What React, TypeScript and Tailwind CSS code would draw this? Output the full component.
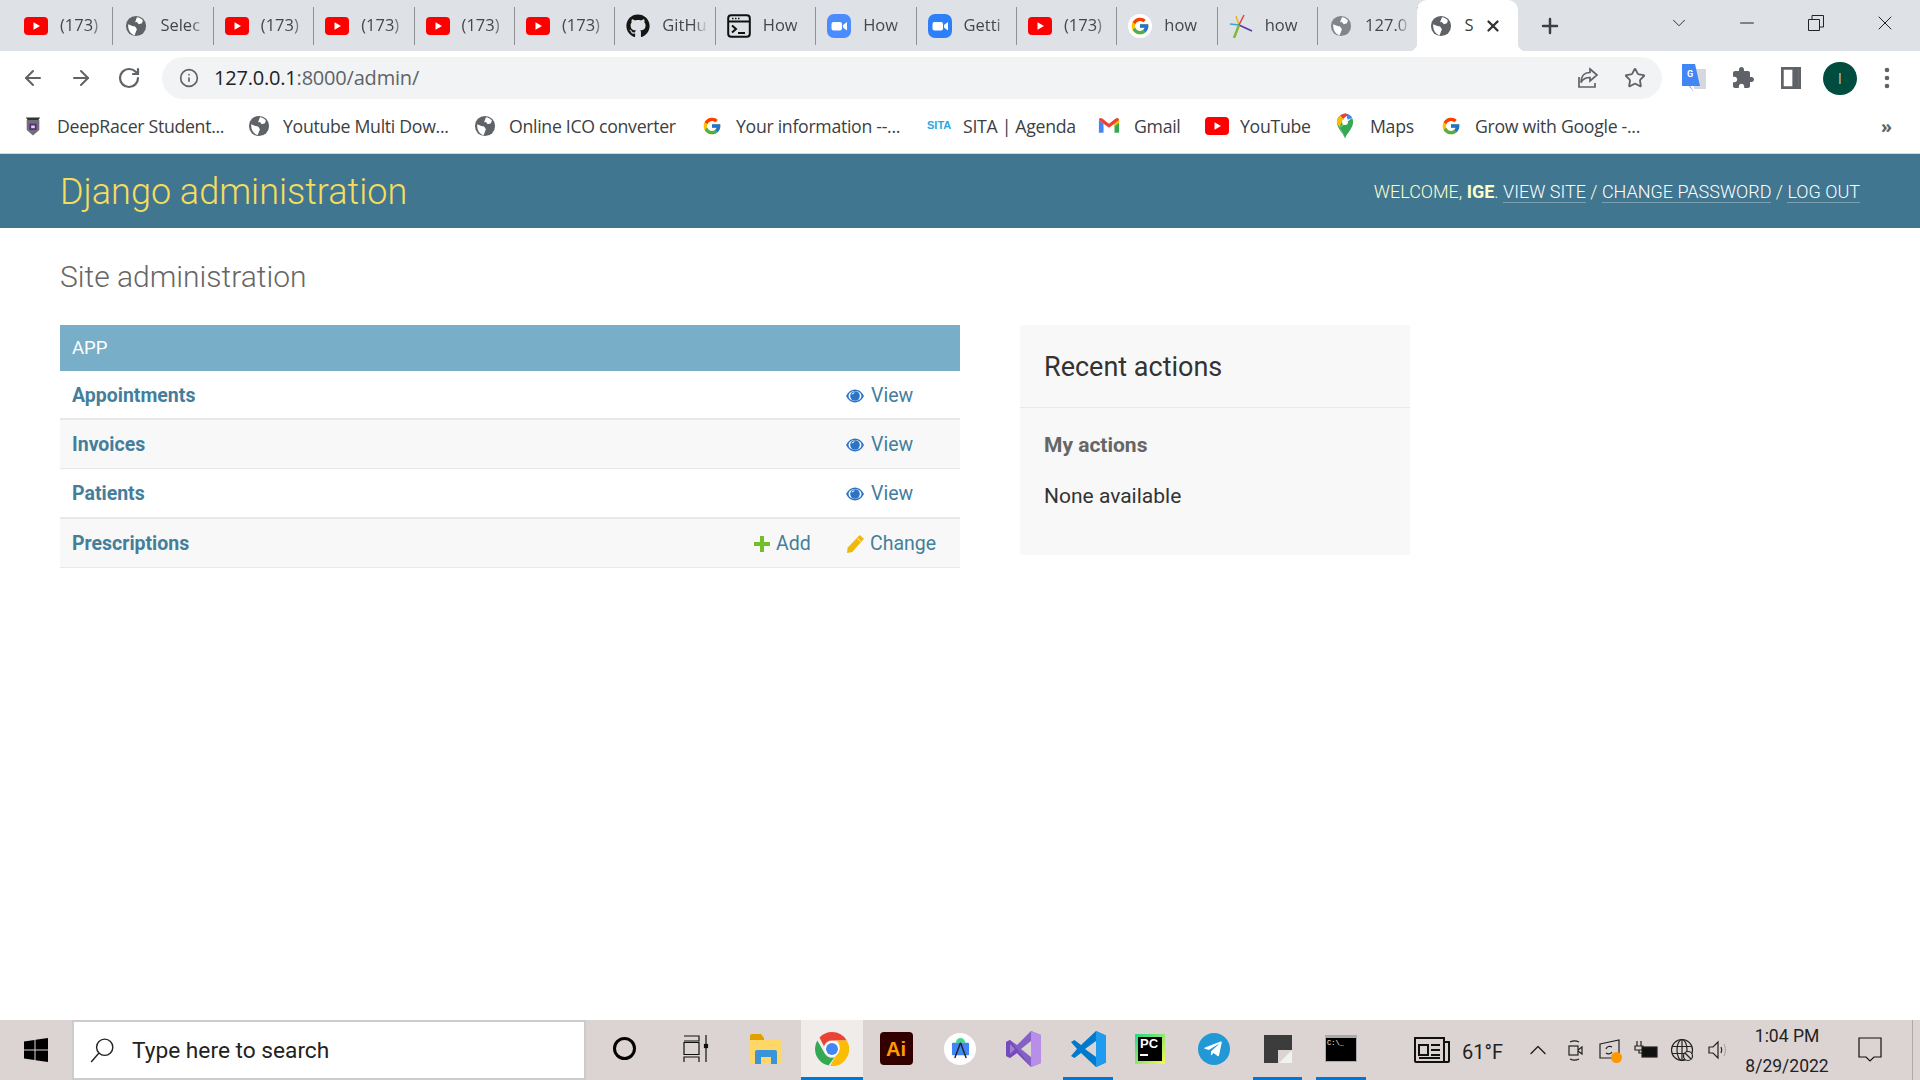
import { ArrowLeft, ArrowRight, RotateCw, Info, Star, X, Plus, ChevronDown, ChevronUp, Minus } from "lucide-react";
import { FaGithub, FaTelegramPlane } from "react-icons/fa";
import { FcGoogle } from "react-icons/fc";

const ui = "font-['Open_Sans','Noto_Sans',sans-serif]";

/* favicons */
function YouTubeIcon({ className = "w-6 h-[18px]" }: { className?: string }) {
  return (
    <svg viewBox="0 0 24 18" className={className}>
      <rect width="24" height="18" rx="4" fill="#f00" />
      <path d="M9.5 5.2 16 9l-6.5 3.8z" fill="#fff" />
    </svg>
  );
}

function GlobeIcon({ color = "#5f6368" }: { color?: string }) {
  return (
    <svg viewBox="0 0 24 24" className="w-[22px] h-[22px] shrink-0">
      <circle cx="12" cy="12" r="11" fill={color} />
      <path d="M13 2.500c2.500.3 5 1.500 6.500 3.500l-1 3-3.500 1-2-2.500-2 .5z" fill="#fff" />
      <path d="M3.500 10 8 12l3 .5 2 3-2.500 6.500c-4-1-7.500-5-7-12z" fill="#fff" />
    </svg>
  );
}

function TerminalIcon() {
  return (
    <svg viewBox="0 0 24 24" className="w-6 h-6 shrink-0" fill="none" stroke="#111" strokeWidth="2">
      <rect x="1.2" y="1.2" width="21.6" height="21.6" rx="3" />
      <path d="M1.5 7.5h21" />
      <path d="M5 11.5l4 3.5-4 3.5M11 19h7" />
      <path d="M5 4.5h1.5M8 4.5h1.5M11 4.5h1.5" strokeWidth="1.5" />
    </svg>
  );
}

function ZoomIcon({ color = "#4a8cff" }: { color?: string }) {
  return (
    <svg viewBox="0 0 24 24" className="w-6 h-6 shrink-0">
      <rect width="24" height="24" rx="7" fill={color} />
      <rect x="4.5" y="8" width="10.5" height="8.5" rx="2" fill="#fff" />
      <path d="M16 11l4-3v8.5l-4-3z" fill="#fff" />
    </svg>
  );
}

function StarburstIcon() {
  return (
    <svg viewBox="0 0 24 24" className="w-6 h-6 shrink-0" fill="none" strokeWidth="1.6">
      <path d="M10 11 7 2" stroke="#e8b830" />
      <path d="M10 11 15 1" stroke="#e0483e" />
      <path d="M10 11 1 10" stroke="#3aa7c9" />
      <path d="M10 11 23 17" stroke="#5b3a9c" />
      <path d="M10 11 5 24" stroke="#7cb82f" strokeWidth="2.4" />
    </svg>
  );
}

function DeepRacerIcon() {
  return (
    <svg viewBox="0 0 20 26" className="w-[18px] h-[25px]">
      <path d="M2 4h16l-2 3H4z" fill="#333" />
      <path d="M3 7h14v11l-7 6-7-6z" fill="#6f6f78" />
      <path d="M6 11h8v7H6z" fill="#5b2a86" />
      <path d="M8 13h4v3H8z" fill="#ddd" />
    </svg>
  );
}

function GmailIcon() {
  return (
    <svg viewBox="0 0 24 18" className="w-[22px] h-[17px]">
      <path d="M1 17V3l5 4v10z" fill="#4285f4" />
      <path d="M23 17V3l-5 4v10z" fill="#34a853" />
      <path d="M1 3c0-2 2-3 4-1.500L12 7l7-5.500C21 0 23 1 23 3l-5 4-6 4.500L6 7z" fill="#ea4335" />
      <path d="M18 7l5-4v3l-5 4z" fill="#fbbc04" />
    </svg>
  );
}

function MapsIcon() {
  return (
    <svg viewBox="0 0 20 30" className="w-[18px] h-[28px]">
      <path d="M10 29C8 22 1 18 1 10.500A9 9 0 0 1 5 3l6 7-7 7c2 4 5 7 6 12z" fill="#34a853" />
      <path d="M10 29c1-5 9-11 9-18.500 0-1.500-.3-3-1-4.500L4 17c2 4 5 7 6 12z" fill="#34a853" />
      <path d="M5 3a9 9 0 0 1 6-2l-4 6z" fill="#1a73e8" />
      <path d="M11 1a9 9 0 0 1 7 5l-5 2z" fill="#4285f4" />
      <path d="M1 10.500A9 9 0 0 1 5 3l3 4-4 9c-2-2-3-3.500-3-5.500z" fill="#fbbc04" />
      <path d="M5 3l3 4 5-4-2-2c-2 0-4 1-6 2z" fill="#ea4335" />
      <circle cx="10" cy="10.500" r="3.300" fill="#fff" />
    </svg>
  );
}

function WindowsLogo() {
  return (
    <svg viewBox="0 0 24 24" className="w-6 h-6" fill="#000">
      <path d="M0 3.400 10.500 2v9.500H0zM11.500 1.800 24 0v11.500H11.500zM0 12.500h10.500V22L0 20.600zM11.500 12.500H24V24l-12.500-1.800z" />
    </svg>
  );
}

function ChromeIcon() {
  return (
    <svg viewBox="0 0 34 34" className="w-[34px] h-[34px]">
      <path d="M17 0a17 17 0 0 1 14.700 8.500H17a8.500 8.500 0 0 0-8 5.700L4.500 5.500A17 17 0 0 1 17 0z" fill="#ea4335" />
      <path d="M2.300 8.500 10 22a8.500 8.500 0 0 0 9.500 3.200L13.500 33.600A17 17 0 0 1 2.300 8.500z" fill="#34a853" />
      <path d="M31.700 8.500A17 17 0 0 1 15 34l7.500-13a8.500 8.500 0 0 0-1-12.500z" fill="#fbbc04" />
      <circle cx="17" cy="17" r="7.500" fill="#fff" />
      <circle cx="17" cy="17" r="6" fill="#4285f4" />
    </svg>
  );
}

function VisualStudioIcon() {
  return (
    <svg viewBox="0 0 36 36" className="w-9 h-9">
      <path d="M26 0 36 4v28l-10 4-14-14-7 5-4-2V11l4-2 7 5z" fill="#8661c5" />
      <path d="M26 0 36 4v28l-10 4z" fill="#b78fe8" />
      <path d="M5 13v10l5-5z" fill="#fff" fillOpacity=".85" />
      <path d="M26 10 16 18l10 8z" fill="#dcd4d2" />
      <path d="M1 11l4-2 21 27-14-14-7 5-4-2z" fill="#6a3bb5" fillOpacity=".6" />
    </svg>
  );
}

function VSCodeIcon() {
  return (
    <svg viewBox="0 0 36 36" className="w-9 h-9">
      <path d="M26 0 36 4.500v27L26 36 11 22l-6.500 5L1 25l6-7-6-7 3.500-2L11 14z" fill="#007acc" />
      <path d="M26 0 36 4.500v27L26 36z" fill="#1f9cf0" />
      <path d="M26 10 15 18l11 8z" fill="#dcd4d2" />
    </svg>
  );
}

function TrayIcon({ children }: { children: React.ReactNode }) {
  return (
    <svg viewBox="0 0 24 24" className="w-6 h-6" fill="none" stroke="#222" strokeWidth="1.200">
      {children}
    </svg>
  );
}

/* browser chrome */
const tabs = [
  { icon: <YouTubeIcon />, label: "(173)" },
  { icon: <GlobeIcon />, label: "Selec" },
  { icon: <YouTubeIcon />, label: "(173)" },
  { icon: <YouTubeIcon />, label: "(173)" },
  { icon: <YouTubeIcon />, label: "(173)" },
  { icon: <YouTubeIcon />, label: "(173)" },
  { icon: <FaGithub className="w-6 h-6 shrink-0 text-[#161614]" />, label: "GitHu" },
  { icon: <TerminalIcon />, label: "How" },
  { icon: <ZoomIcon />, label: "How" },
  { icon: <ZoomIcon color="#2d7ff9" />, label: "Getti" },
  { icon: <YouTubeIcon />, label: "(173)" },
  { icon: <FcGoogle className="w-6 h-6 shrink-0 bg-white rounded-full p-[2px]" />, label: "how" },
  { icon: <StarburstIcon />, label: "how" },
  { icon: <GlobeIcon color="#80868b" />, label: "127.0" },
];

const bookmarks = [
  { icon: <DeepRacerIcon />, label: "DeepRacer Student...", w: "w-[224px]", gap: "gap-[15px]" },
  { icon: <GlobeIcon />, label: "Youtube Multi Dow...", w: "w-[226px]", gap: "gap-[13px]" },
  { icon: <GlobeIcon />, label: "Online ICO converter", w: "w-[228px]", gap: "gap-[13px]" },
  { icon: <FcGoogle className="w-5 h-5 shrink-0" />, label: "Your information --...", w: "w-[225px]", gap: "gap-[14px]" },
  {
    icon: <span className="w-6 text-[11px] leading-none font-black text-[#2aa7df] font-['Liberation_Sans',sans-serif]">SITA</span>,
    label: "SITA | Agenda",
    w: "w-[171px]",
    gap: "gap-[12px]",
  },
  { icon: <GmailIcon />, label: "Gmail", w: "w-[107px]", gap: "gap-[14px]" },
  { icon: <YouTubeIcon />, label: "YouTube", w: "w-[131px]", gap: "gap-[11px]" },
  { icon: <MapsIcon />, label: "Maps", w: "w-[105px]", gap: "gap-[16px]" },
  { icon: <FcGoogle className="w-5 h-5 shrink-0" />, label: "Grow with Google -...", w: "w-[220px]", gap: "gap-[14px]" },
];

function Tab({ icon, label }: { icon: React.ReactNode; label: string }) {
  return (
    <div className="w-[100.4px] h-[38px] flex items-center pl-[11px] gap-3 border-r border-[#8e9196] shrink-0">
      <span className="w-6 flex justify-center shrink-0">{icon}</span>
      <span className="w-[46px] whitespace-nowrap text-[16.5px] text-[#45474b] [mask-image:linear-gradient(90deg,#000_68%,transparent)]">
        {label}
      </span>
    </div>
  );
}

function BrowserChrome() {
  return (
    <div className={`${ui} shrink-0`}>
      {/* tab strip */}
      <div className="h-[51px] bg-[#dee1e6] flex items-center pl-[13px]">
        {tabs.map((t, i) => (
          <Tab key={i} icon={t.icon} label={t.label} />
        ))}
        <div className="relative h-[51px] w-[101px] self-end -ml-[1px] bg-white rounded-t-[10px] flex items-center pl-[13px] shrink-0">
          <span className="absolute bottom-0 -left-2 w-2 h-2 bg-[radial-gradient(circle_at_0_0,transparent_8px,white_8.500px)]" />
          <span className="absolute bottom-0 -right-2 w-2 h-2 bg-[radial-gradient(circle_at_100%_0,transparent_8px,white_8.500px)]" />
          <GlobeIcon />
          <span className="ml-[12px] text-[16.5px] text-[#3c4043]">S</span>
          <X className="ml-[10px] w-[18px] h-[18px] text-[#333]" strokeWidth={3} />
        </div>
        <Plus className="ml-[20px] w-6 h-6 text-[#3c4043]" strokeWidth={2.500} />
        <div className="ml-auto flex items-center text-[#222] h-full -mt-[5px]">
          <ChevronDown className="w-[22px] h-[22px] mr-[46px]" strokeWidth={1} />
          <Minus className="w-[22px] h-[22px] mr-[50px]" strokeWidth={1.200} />
          <svg viewBox="0 0 16 16" className="w-4 h-4 mr-[49px]" fill="none" stroke="#222">
            <path d="M.5 4.500h11v11H.5zM4 4.500V.5h11.500V12h-4" />
          </svg>
          <X className="w-[24px] h-[24px] mr-[23px]" strokeWidth={1} />
        </div>
      </div>

      {/* toolbar */}
      <div className="h-[54px] bg-white flex items-center">
        <div className="w-[162px] flex items-center pl-[21px] gap-6 text-[#5f6368] shrink-0">
          <ArrowLeft className="w-6 h-6" strokeWidth={2} />
          <ArrowRight className="w-6 h-6" strokeWidth={2} />
          <RotateCw className="w-6 h-6" strokeWidth={2.200} />
        </div>
        <div className="w-[1500px] h-[42px] rounded-full bg-[#f1f3f4] flex items-center pl-[17px] pr-[16px] shrink-0">
          <Info className="w-5 h-5 text-[#5f6368]" strokeWidth={2} />
          <span className="ml-[15px] text-[20px] tracking-[-0.2px] text-[#202124]">
            127.0.0.1<span className="text-[#5f6368]">:8000/admin/</span>
          </span>
          <svg viewBox="0 0 24 24" className="ml-auto w-6 h-6" fill="none" stroke="#5f6368" strokeWidth="1.700">
            <path d="M3 11v10h16v-4M14 3l7 6-7 6v-3.500c-4 0-7 1-9 5 0-6 3-10 9-10z" />
          </svg>
          <Star className="ml-[24px] w-[22px] h-[22px] text-[#5f6368]" strokeWidth={2} />
        </div>
        <svg viewBox="0 0 24 28" className="ml-[20px] w-6 h-7">
          <path d="M10 5h14v20H12z" fill="#d5d8dc" />
          <path d="M0 0h13l5 22H8l4 6-5-6H0z" fill="#4285f4" />
          <text x="5" y="13" fontSize="9" fontWeight="700" fill="#fff" fontFamily="Roboto">G</text>
        </svg>
        <svg viewBox="0 0 24 24" className="ml-[25px] w-6 h-6" fill="#5f6368">
          <path d="M20.500 11H19V7c0-1.100-.9-2-2-2h-4V3.500C13 2.120 11.880 1 10.500 1S8 2.120 8 3.500V5H4c-1.100 0-1.990.9-1.990 2v3.800H3.500c1.490 0 2.700 1.210 2.700 2.700s-1.210 2.700-2.700 2.700H2V20c0 1.100.9 2 2 2h3.800v-1.500c0-1.490 1.210-2.700 2.700-2.700 1.490 0 2.700 1.210 2.700 2.700V22H17c1.100 0 2-.9 2-2v-4h1.500c1.380 0 2.500-1.120 2.500-2.500S21.880 11 20.500 11z" />
        </svg>
        <svg viewBox="0 0 22 24" className="ml-[26px] w-[20px] h-[22px]" fill="none" stroke="#5f6368" strokeWidth="3">
          <path d="M1.500 1.500h19v21h-19z" />
          <path d="M16 1.500v21" strokeWidth="7" />
        </svg>
        <div className="ml-[22px] w-[34px] h-[33px] rounded-full bg-[#004d40] text-white text-[15px] font-light flex items-center justify-center">
          I
        </div>
        <svg viewBox="0 0 6 24" className="ml-[27px] w-[6px] h-6" fill="#5f6368">
          <circle cx="3" cy="4" r="2.300" />
          <circle cx="3" cy="12" r="2.300" />
          <circle cx="3" cy="20" r="2.300" />
        </svg>
      </div>

      {/* bookmarks */}
      <div className="h-[49px] pb-[6px] bg-white flex items-center pl-[24px] pr-[28px] border-b border-[#d9d9d9] text-[#3c4043]">
        {bookmarks.map((b) => (
          <div key={b.label} className={`${b.w} flex items-center ${b.gap} shrink-0`}>
            {b.icon}
            <span className="text-[17.700px] tracking-[-0.3px] whitespace-nowrap">{b.label}</span>
          </div>
        ))}
        <span className="ml-auto text-[18px] font-bold text-[#5f6368]">»</span>
      </div>
    </div>
  );
}

/* django admin */
function ViewLink() {
  return (
    <span className="flex items-center gap-[5px] -ml-[1px]">
      <svg viewBox="0 0 20 16" className="w-[20px] h-4">
        <path d="M1 8c2.500-4.500 5.500-6.500 9-6.500S16.500 3.500 19 8c-2.500 4.500-5.500 6.500-9 6.500S3.500 12.500 1 8z" fill="#2a73c5" />
        <ellipse cx="10" cy="8" rx="6.500" ry="5" fill="#fff" />
        <circle cx="10" cy="8" r="4.800" fill="#2a73c5" />
        <path d="M6.500 6.500c.5-1.500 2-2.300 3.500-2.300-1 1-2 2-3.500 2.300z" fill="#fff" />
      </svg>
      <span className="ml-[1px]">View</span>
    </span>
  );
}

function AddLink() {
  return (
    <span className="flex items-center gap-[6px] pl-[1px]">
      <svg viewBox="0 0 16 16" className="w-4 h-4" fill="#70bf2b">
        <path d="M6 0h4v6h6v4h-6v6H6v-6H0V6h6z" />
      </svg>
      Add
    </span>
  );
}

function ChangeLink() {
  return (
    <span className="flex items-center gap-[5px]">
      <svg viewBox="0 0 18 18" className="w-[19px] h-[19px] -mt-[2px]" fill="#efb80b">
        <path d="M13 1l4 3.500L6 17l-5 1 .5-5z" />
        <path d="M11 4.500 14 7" stroke="#fff" strokeWidth=".8" />
      </svg>
      Change
    </span>
  );
}

const rows = [
  { name: "Appointments", border: "border-b-2", bg: "bg-white", h: "h-[49px]", links: "view" },
  { name: "Invoices", border: "border-b", bg: "bg-[#f8f8f8]", h: "h-[49px]", links: "view" },
  { name: "Patients", border: "border-b-2", bg: "bg-white", h: "h-[50px]", links: "view" },
  { name: "Prescriptions", border: "border-b", bg: "bg-[#f8f8f8]", h: "h-[49px]", links: "edit" },
];

function DjangoAdmin() {
  return (
    <div className="flex-1 bg-white font-['Roboto',sans-serif]">
      <header className="h-[74px] bg-[#417690] flex items-center justify-between pl-[60px] pr-[60px]">
        <div className="text-[36px] font-light text-[#f5dd5d] pt-[2px]">Django administration</div>
        <div className="text-[18px] font-light uppercase text-[#ffffcc]">
          Welcome, <strong className="font-bold">Ige</strong>.{" "}
          <span className="text-white border-b border-white/30">View site</span> /{" "}
          <span className="text-white border-b border-white/30">Change password</span> /{" "}
          <span className="text-white border-b border-white/30">Log out</span>
        </div>
      </header>

      <main className="px-[60px] pt-[31px]">
        <h1 className="h-[36px] leading-[36px] text-[30px] font-light text-[#666]">Site administration</h1>
        <div className="flex gap-[60px] mt-[30px] items-start">
          <section className="w-[900px]">
            <div className="h-[46px] bg-[#79aec8] text-white text-[18.500px] uppercase flex items-center px-3 pt-[1px]">App</div>
            {rows.map((r) => (
              <div key={r.name} className={`${r.h} ${r.bg} ${r.border} border-[#e8e8e8] flex items-center pl-3 pt-[2px] text-[19.500px] text-[#447e9b]`}>
                <span className="flex-1 font-bold">{r.name}</span>
                <span className="w-[93px]">{r.links === "edit" && <AddLink />}</span>
                <span className="w-[114px]">{r.links === "edit" ? <ChangeLink /> : <ViewLink />}</span>
              </div>
            ))}
          </section>

          <aside className="w-[390px] h-[230px] bg-[#f8f8f8]">
            <h2 className="h-[83px] border-b border-[#e8e8e8] flex items-center px-6 text-[27px] text-[#333] pt-[2px]">Recent actions</h2>
            <h3 className="mt-[25px] px-6 text-[21px] font-bold text-[#666] leading-6">My actions</h3>
            <p className="mt-[27px] px-6 text-[21px] text-[#333] leading-6">None available</p>
          </aside>
        </div>
      </main>
    </div>
  );
}

/* windows taskbar */
function TaskSlot({ w, active, underline, children }: { w: string; active?: boolean; underline?: boolean; children: React.ReactNode }) {
  return (
    <div className={`${w} h-full flex items-center justify-center shrink-0 border-b-[3px] ${underline ? "border-[#0078d4]" : "border-transparent"} ${active ? "bg-[#f0ecea]" : ""}`}>
      {children}
    </div>
  );
}

function Taskbar() {
  return (
    <div className={`h-[60px] shrink-0 bg-[#dcd4d2] flex items-center ${ui}`}>
      <div className="w-[73px] flex justify-center shrink-0 -ml-[1px]">
        <WindowsLogo />
      </div>
      <div className="w-[514px] h-[60px] bg-white border-2 border-[#cccccc] flex items-center pl-[15px] shrink-0">
        <svg viewBox="0 0 24 24" className="w-[26px] h-[26px]" fill="none" stroke="#222" strokeWidth="1.300">
          <circle cx="14.500" cy="9.500" r="7.500" />
          <path d="M9 15 2 23" />
        </svg>
        <span className="ml-[17px] pt-[3px] text-[22.700px] text-[#222] font-['Roboto',sans-serif]">Type here to search</span>
      </div>
      <TaskSlot w="w-[76px]">
        <div className="w-[23px] h-[23px] rounded-full border-[3px] border-black" />
      </TaskSlot>
      <TaskSlot w="w-[68px]">
        <svg viewBox="0 0 26 30" className="w-[26px] h-[30px]" fill="none" stroke="#111" strokeWidth="1.200">
          <path d="M1 2h15v5H1M1 8.500h15v12H1zM1 28v-5h15v5M23 1v9M23 14v14" />
          <rect x="21.500" y="10.500" width="3" height="3" fill="#111" />
        </svg>
      </TaskSlot>
      <TaskSlot w="w-[71px]">
        <svg viewBox="0 0 32 30" className="w-8 h-[30px]">
          <path d="M0 2a2 2 0 0 1 2-2h9l3 4v4H0z" fill="#e0a000" />
          <path d="M0 6h30a2 2 0 0 1 2 2v20a2 2 0 0 1-2 2H2a2 2 0 0 1-2-2z" fill="#ffd766" />
          <path d="M5 18a2 2 0 0 1 2-2h18a2 2 0 0 1 2 2v12h-6v-7h-10v7H5z" fill="#3b93d8" />
        </svg>
      </TaskSlot>
      <TaskSlot w="w-[62px]" active underline>
        <ChromeIcon />
      </TaskSlot>
      <TaskSlot w="w-[66px]">
        <div className="w-[33px] h-[33px] rounded-[4px] bg-[#330000] flex items-center justify-center text-[#ff9a00] font-bold text-[20px] font-['Liberation_Sans',sans-serif]">
          Ai
        </div>
      </TaskSlot>
      <TaskSlot w="w-[62px]">
        <div className="w-[32px] h-[32px] rounded-full bg-white flex items-center justify-center">
          <svg viewBox="0 0 20 22" className="w-[19px] h-[21px]">
            <path d="M5 5a5 5 0 0 1 10 0z" fill="#3ddc84" />
            <rect x="1" y="5" width="18" height="13" rx="1" fill="#4285f4" />
            <path d="M10 5 4 21M10 5l6 16" stroke="#222" strokeWidth="1.500" />
          </svg>
        </div>
      </TaskSlot>
      <TaskSlot w="w-[64px]">
        <VisualStudioIcon />
      </TaskSlot>
      <div className="w-[8px] shrink-0" />
      <TaskSlot w="w-[50px]" underline>
        <VSCodeIcon />
      </TaskSlot>
      <TaskSlot w="w-[74px]">
        <div className="w-[30px] h-[30px] bg-[linear-gradient(135deg,#21d789,#fcf84a)] p-[3px]">
          <div className="w-full h-full bg-black text-white text-[13px] font-bold leading-[14px] pl-[2px] font-['Liberation_Sans',sans-serif]">
            PC
            <div className="w-2 h-[2px] bg-white mt-[3px]" />
          </div>
        </div>
      </TaskSlot>
      <TaskSlot w="w-[54px]">
        <div className="w-[32px] h-[32px] rounded-full bg-[#2298d6] flex items-center justify-center">
          <FaTelegramPlane className="w-5 h-5 text-white -ml-[2px]" />
        </div>
      </TaskSlot>
      <div className="w-[12px] shrink-0" />
      <TaskSlot w="w-[49px]" underline>
        <svg viewBox="0 0 28 28" className="w-7 h-7">
          <path d="M0 0h28v15H14v13H0z" fill="#3c3c3c" />
          <path d="M28 15v13H15z" fill="#f2f2f2" />
        </svg>
      </TaskSlot>
      <div className="w-[14px] shrink-0" />
      <TaskSlot w="w-[50px]" underline>
        <div className="w-[32px] h-[27px] bg-black border border-[#aaa] border-t-[3px] text-[7px] text-white leading-[10px] pl-[1px] font-['Liberation_Mono',monospace]">
          C:\_
        </div>
      </TaskSlot>

      {/* system tray */}
      <div className="flex items-center ml-[48px] text-[#222] shrink-0">
        <svg viewBox="0 0 36 26" className="w-9 h-[26px]" fill="none" stroke="#111" strokeWidth="2">
          <path d="M1 1h29v23a1 1 0 0 1-1 1H2a1 1 0 0 1-1-1z" />
          <path d="M30 5h5v19a1 1 0 0 1-1 1h-5" />
          <rect x="5" y="8" width="9" height="10" />
          <path d="M17 8h9M17 13h9M17 18h9M5 21h21" />
        </svg>
        <span className="ml-[12px] w-[62px] pt-[3px] text-[20px] font-['Roboto',sans-serif]">61°F</span>
        <ChevronUp className="w-7 h-7 mr-[11px]" strokeWidth={1.200} />
        <TrayIcon>
          <rect x="6" y="8" width="9" height="9" />
          <path d="M15 12l4-3v7l-4-3M7 4c3-1.500 6-1.500 9 0M7 21c3 1.500 6 1.500 9 0" />
        </TrayIcon>
        <span className="relative ml-[11px]">
          <TrayIcon>
            <path d="M2 6 21 2v18H2z" />
            <path d="M8 11a4 4 0 0 1 6-2M14 14a4 4 0 0 1-6 1" />
          </TrayIcon>
          <span className="absolute -bottom-[1px] right-[0px] w-[11px] h-[11px] rounded-full bg-[#ff9800]" />
        </span>
        <span className="ml-[12px]">
          <TrayIcon>
            <path d="M3 3v5M7 3v5M1 8h8v4H1zM5 12v3h4" />
            <rect x="8" y="9" width="15" height="10" fill="#111" />
          </TrayIcon>
        </span>
        <span className="ml-[12px]">
          <TrayIcon>
            <circle cx="12" cy="12" r="10.500" />
            <ellipse cx="12" cy="12" rx="5" ry="10.500" />
            <path d="M2 8.500h20M2 15.500h20M12 1.500v21" />
            <circle cx="18" cy="18" r="4.500" fill="#dcd4d2" />
            <path d="M15 15l6 6" />
          </TrayIcon>
        </span>
        <span className="ml-[12px]">
          <TrayIcon>
            <path d="M3 9h4l5-5v16l-5-5H3z" />
            <path d="M15 9c1 2 1 4 0 6" />
            <path d="M18 6c2 4 2 8 0 12" stroke="#aaa" />
          </TrayIcon>
        </span>
      </div>
      <div className="ml-[1px] w-[112px] text-center text-[17.500px] leading-[30px] pt-[2px] text-[#222] font-['Roboto',sans-serif] shrink-0">
        <div>1:04 PM</div>
        <div>8/29/2022</div>
      </div>
      <svg viewBox="0 0 24 26" className="ml-[15px] w-6 h-[26px] shrink-0" fill="none" stroke="#111" strokeWidth="1.200">
        <path d="M1 1h22v19h-7l-4 4-4-4H1z" />
      </svg>
      <div className="ml-[30px] w-[1px] h-full bg-[#aaa] shrink-0" />
    </div>
  );
}

export default function App() {
  return (
    <div className="w-full h-screen flex flex-col overflow-hidden">
      <BrowserChrome />
      <DjangoAdmin />
      <Taskbar />
    </div>
  );
}
